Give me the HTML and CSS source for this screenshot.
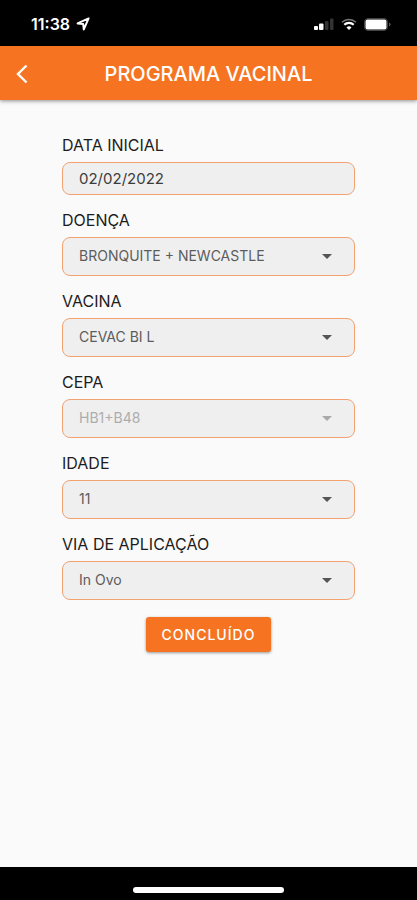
FILE: index.html
```html
<!doctype html>
<html lang="pt-BR">
  <head>
    <meta charset="UTF-8" />
    <meta name="viewport" content="width=device-width, initial-scale=1.0" />
    <title>Programa Vacinal</title>
    <link rel="stylesheet" href="styles.css">
  </head>
  <body>
    <div class="status-bar">
      <div class="status-time">
        <span>11:38</span>
        <svg width="14" height="14" viewBox="0 0 14 14" aria-hidden="true">
          <path d="M12.6 1.4 1.6 6.4l5.6.6 .6 5.4z" fill="none" stroke="#fff" stroke-width="2" stroke-linejoin="round" />
        </svg>
      </div>
      <div class="status-icons">
        <svg width="20" height="12" viewBox="0 0 20 12" aria-hidden="true">
          <rect x="0" y="8" width="4" height="4" rx="1" fill="#fff" />
          <rect x="5" y="5.5" width="4.5" height="6.5" rx="1" fill="#fff" />
          <rect x="11" y="3" width="3.5" height="9" rx="1" fill="#333" />
          <rect x="16" y="0.5" width="3.5" height="11.5" rx="1" fill="#333" />
        </svg>
        <svg width="16" height="12" viewBox="0 0 16 12" aria-hidden="true">
          <path d="M1 4.3a10 10 0 0 1 14 0" fill="none" stroke="#777" stroke-width="1.5" />
          <path d="M3.3 6.8a6.7 6.7 0 0 1 9.4 0" fill="none" stroke="#fff" stroke-width="2.2" />
          <path d="M8 12 5.5 9.4a3.6 3.6 0 0 1 5 0z" fill="#fff" />
        </svg>
        <svg width="27" height="13" viewBox="0 0 27 13" aria-hidden="true">
          <rect x="0.5" y="0.5" width="23" height="12" rx="3.5" fill="none" stroke="#444" />
          <rect x="1.5" y="1.5" width="21" height="10" rx="2" fill="#fff" />
          <path d="M25 4.5q1.6.5 1.6 2t-1.6 2z" fill="#555" />
        </svg>
      </div>
    </div>

    <header class="app-header">
      <button class="back" type="button" aria-label="Voltar">
        <svg width="12" height="20" viewBox="0 0 12 20" aria-hidden="true">
          <path d="M10.5 1.5 2 10l8.5 8.5" fill="none" stroke="#fff" stroke-width="2.4" />
        </svg>
      </button>
      <h1>PROGRAMA VACINAL</h1>
    </header>

    <main>
      <form class="form">
        <div class="field">
          <label for="data">DATA INICIAL</label>
          <input class="control date" id="data" type="text" value="02/02/2022" />
        </div>
        <div class="field">
          <label for="doenca">DOENÇA</label>
          <select class="control" id="doenca">
            <option>BRONQUITE + NEWCASTLE</option>
          </select>
        </div>
        <div class="field">
          <label for="vacina">VACINA</label>
          <select class="control" id="vacina">
            <option>CEVAC BI L</option>
          </select>
        </div>
        <div class="field">
          <label for="cepa">CEPA</label>
          <select class="control" id="cepa" disabled>
            <option>HB1+B48</option>
          </select>
        </div>
        <div class="field">
          <label for="idade">IDADE</label>
          <select class="control" id="idade">
            <option>11</option>
          </select>
        </div>
        <div class="field">
          <label for="via">VIA DE APLICAÇÃO</label>
          <select class="control" id="via">
            <option>In Ovo</option>
          </select>
        </div>
        <button class="submit" type="button">CONCLUÍDO</button>
      </form>
    </main>

    <footer class="home-bar">
      <div class="home-indicator"></div>
    </footer>
  </body>
</html>
```
FILE: styles.css
```css
* {
  box-sizing: border-box;
  margin: 0;
  padding: 0;
}

body {
  display: flex;
  flex-direction: column;
  min-height: 100vh;
  font-family: Inter, "Liberation Sans", sans-serif;
  background-color: #fafafa;
  color: #1c1c1c;
}

/* barra de status */
.status-bar {
  display: flex;
  justify-content: space-between;
  align-items: center;
  height: 46px;
  padding: 2px 26px 0 31px;
  background-color: #000;
  color: #fff;
}

.status-time {
  display: flex;
  align-items: center;
  gap: 6px;
  font-size: 16px;
  font-weight: 600;
}

.status-icons {
  display: flex;
  align-items: center;
  gap: 7px;
}

/* cabeçalho */
.app-header {
  display: grid;
  grid-template-columns: 44px 1fr 44px;
  align-items: center;
  height: 54px;
  padding-top: 2px;
  background-color: #f67421;
  color: #fff;
  box-shadow: 0 1px 4px rgba(0, 0, 0, 0.45);
}

.app-header h1 {
  font-size: 20px;
  font-weight: 500;
  line-height: 24px;
  text-align: center;
}

.back {
  display: flex;
  align-items: center;
  justify-content: center;
  height: 44px;
  border: none;
  background: none;
}

/* formulário */
main {
  flex: 1;
}

.form {
  display: flex;
  flex-direction: column;
  gap: 15px;
  padding: 35px 62px;
}

.field {
  display: flex;
  flex-direction: column;
  gap: 7px;
}

.field label {
  font-size: 16px;
  line-height: 20px;
}

.control {
  width: 100%;
  height: 39px;
  padding: 0 16px;
  border: 1px solid #f2a271;
  border-radius: 8px;
  background-color: #efefef;
  color: #5c5c5c;
  font-family: inherit;
  font-size: 14px;
  appearance: none;
}

.date {
  height: 33px;
  color: #3c3c3c;
  font-size: 15px;
}

select.control {
  padding-bottom: 2px;
  background-image: url("data:image/svg+xml,%3Csvg xmlns='http://www.w3.org/2000/svg' width='10' height='5'%3E%3Cpath d='M0 0h10L5 5z' fill='%23555'/%3E%3C/svg%3E");
  background-repeat: no-repeat;
  background-position: right 22px center;
}

select.control:disabled {
  background-image: url("data:image/svg+xml,%3Csvg xmlns='http://www.w3.org/2000/svg' width='10' height='5'%3E%3Cpath d='M0 0h10L5 5z' fill='%23aaa'/%3E%3C/svg%3E");
  color: #adadad;
  opacity: 1;
}

.submit {
  align-self: center;
  height: 35px;
  margin-top: 2px;
  padding: 0 16px;
  border: none;
  border-radius: 3px;
  background-color: #f67421;
  box-shadow: 0 1px 3px rgba(0, 0, 0, 0.4);
  color: #fff;
  font-family: inherit;
  font-size: 14px;
  font-weight: 500;
  letter-spacing: 1px;
}

/* indicador inferior */
.home-bar {
  display: flex;
  justify-content: center;
  align-items: flex-end;
  height: 33px;
  padding-bottom: 7px;
  background-color: #000;
}

.home-indicator {
  width: 36%;
  height: 6px;
  border-radius: 3px;
  background-color: #fff;
}
```
